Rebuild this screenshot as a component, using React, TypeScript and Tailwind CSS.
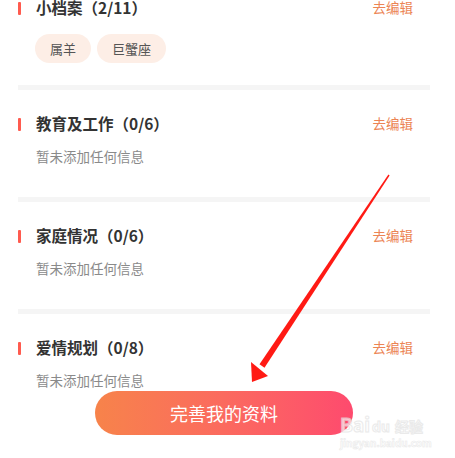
import React from "react";

const font = { fontFamily: '"Noto Sans CJK SC", "Noto Sans", sans-serif' };

interface Section {
  title: string;
  tags?: string[];
}

const sections: Section[] = [
  { title: "小档案（2/11）", tags: ["属羊", "巨蟹座"] },
  { title: "教育及工作（0/6）" },
  { title: "家庭情况（0/6）" },
  { title: "爱情规划（0/8）" },
];

function Header({ title }: { title: string }) {
  return (
    <div className="flex items-center h-[18px] pr-[17px]">
      <span className="w-[3px] h-[13px] bg-[#ff5b4f] rounded-[1px]" />
      <span className="ml-[15px] flex-1 text-[15.5px] font-bold text-[#333333] leading-none">{title}</span>
      <span className="text-[13.5px] text-[#ec8454] leading-none">去编辑</span>
    </div>
  );
}

export default function App() {
  return (
    <div className="relative w-[455px] h-[458px] bg-white overflow-hidden" style={font}>
      <div className="ml-[18px] mr-[25px] -mt-[1px]">
        {sections.map((s, i) => (
          <div key={i}>
            {i > 0 && <div className="h-[5px] bg-[#f5f5f5]" />}
            <div className={i > 0 ? "pt-[25px]" : ""}>
              <Header title={s.title} />
              {s.tags ? (
                <div className="flex gap-[6px] mt-[17px] ml-[17px] mb-[22px]">
                  {s.tags.map((t) => (
                    <span
                      key={t}
                      className="h-[29px] px-[15px] flex items-center rounded-full bg-[#fdeee6] text-[13px] text-[#555555]"
                    >
                      {t}
                    </span>
                  ))}
                </div>
              ) : (
                <div className="mt-[14px] mb-[32px] ml-[18px] h-[18px] flex items-center text-[13.5px] text-[#8a8a8a]">
                  暂未添加任何信息
                </div>
              )}
            </div>
          </div>
        ))}
      </div>

      {/* floating button */}
      <button className="absolute left-[95px] top-[391px] w-[258px] h-[44px] rounded-full bg-gradient-to-r from-[#f7834a] to-[#fe4a6e] text-white text-[18px] flex items-center justify-center">
        完善我的资料
      </button>

      {/* annotation arrow */}
      <svg className="absolute left-0 top-0 pointer-events-none" width="455" height="458">
        <polygon points="389.6,175.4 388.4,174.6 259.5,364.3 264.5,367.7" fill="#ff1a14" />
        <polygon points="251,362 268,376 252,382" fill="#ff1a14" />
      </svg>

      {/* watermark */}
      <div className="absolute left-[340px] top-[414px] pointer-events-none select-none opacity-70">
        <div className="flex items-end">
          <span className="text-[19px] font-bold text-white leading-none [-webkit-text-stroke:1px_#e2e2e2]">Bai</span>
          <span className="ml-[2px] text-[14px] font-bold text-white leading-none [-webkit-text-stroke:1px_#e2e2e2]">du</span>
          <span className="ml-[5px] text-[14px] font-bold text-white leading-none [-webkit-text-stroke:1px_#e2e2e2]">经验</span>
        </div>
        <div className="mt-[5px] text-[10px] font-bold text-white leading-none [-webkit-text-stroke:0.6px_#e2e2e2]">
          jingyan.baidu.com
        </div>
      </div>
    </div>
  );
}
